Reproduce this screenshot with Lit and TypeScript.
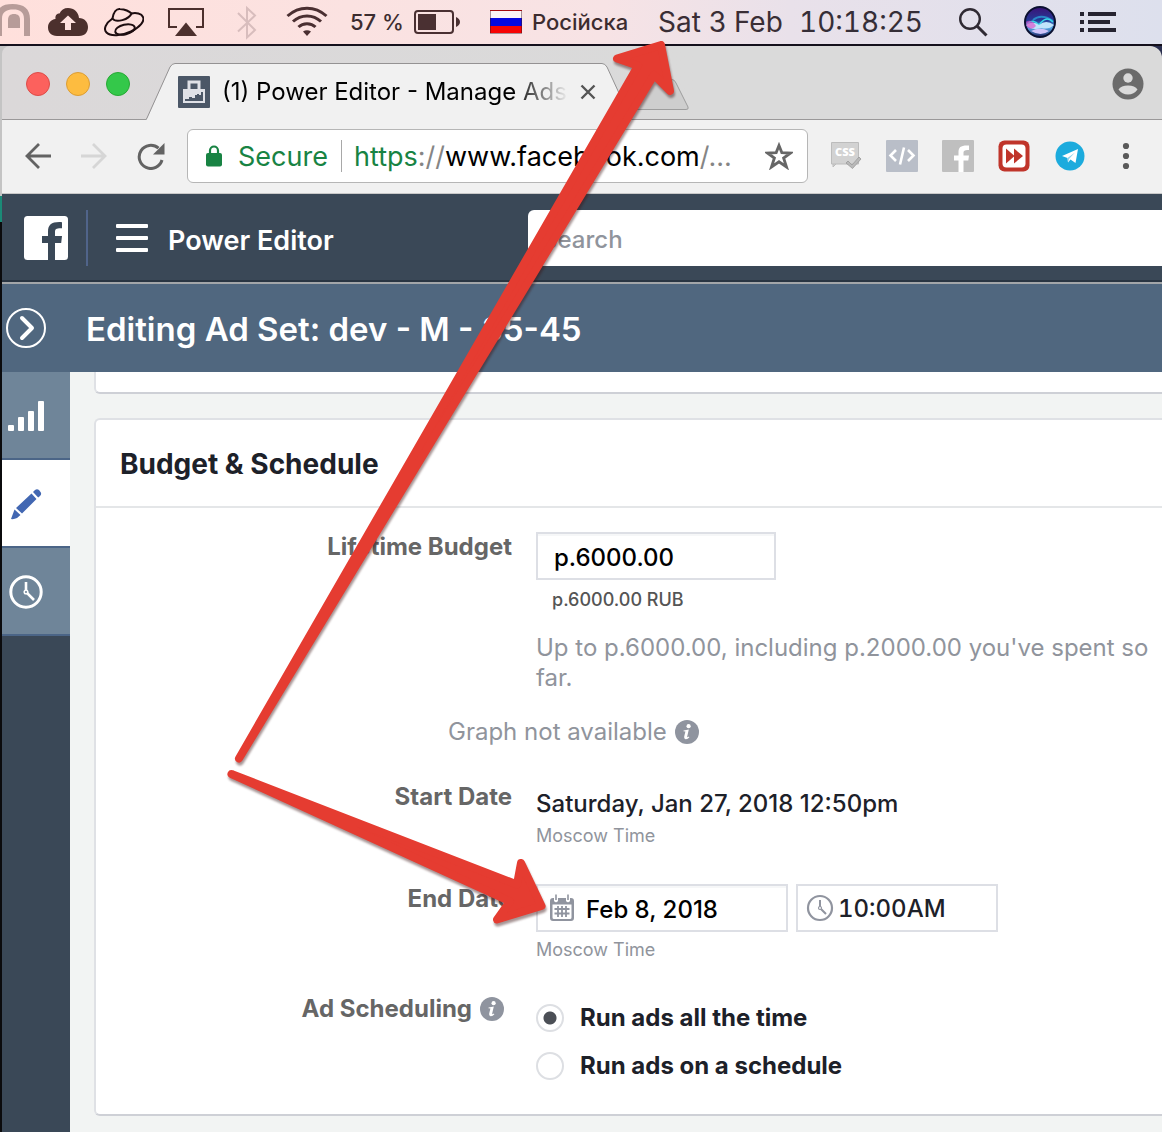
import { LitElement, html, css, svg } from "lit";
import { customElement, state } from "lit/decorators.js";

const info = html`<svg class="info" viewBox="0 0 24 24" width="24" height="24" aria-hidden="true">
  <circle cx="12" cy="12" r="12" fill="#8f949f"/>
  <circle cx="13.6" cy="6.2" r="2.1" fill="#fff"/>
  <path d="M8.6 10.4 L13.8 9.6 L12.2 16.4 Q12 17.8 13.8 16.6 L14.4 17.2 Q12.6 19.4 10.6 19.2 Q8.6 19 9.2 16.6 L10.4 11.6 L8.4 11.3 Z" fill="#fff"/>
</svg>`;

@customElement("mac-menubar")
class MacMenubar extends LitElement {
  static styles = css`
    :host { display: block; font-family: Inter, "Liberation Sans", sans-serif; }
    .bar { height: 44px; border-bottom: 2px solid #14101c; display: flex; align-items: center; color: #3c2c2f; font-weight: 450;
      background: linear-gradient(90deg, #ffe0dc 0%, #fbe2e1 30%, #f7e3e5 52%, #e9e1ea 68%, #dde0ed 100%); }
    svg { display: block; flex: none; }
    .cloud { margin-left: 18px; }
    .planet { margin-left: 16px; }
    .airplay { margin-left: 24px; }
    .bt { margin-left: 33px; }
    .wifi { margin-left: 29px; }
    .pct { margin-left: 22px; width: 64px; font-size: 22px; white-space: nowrap; }
    .flag { margin-left: 30px; width: 32px; height: 24px; box-sizing: border-box; border: 1px solid rgba(60,20,30,.45);
      background: linear-gradient(#fbf4f6 0 33%, #0608e0 33% 67%, #f70505 67%); }
    .lang { margin-left: 10px; width: 126px; font-size: 22px; }
    .date { width: 141px; font-size: 28px; color: #3a2e35; white-space: nowrap; font-weight: 400; }
    .time { width: 160px; font-size: 28px; color: #352e37; font-variant-numeric: tabular-nums; font-weight: 400; }
    .siri { margin-left: 36px; }
    .list { margin-left: 24px; }
  `;
  render() {
    return html`<div class="bar">
      <svg width="30" height="44" viewBox="0 0 30 44"><path d="M-4 36V19C-4 8 2 4 12.500 4C24 4 30 9 30 19V36H24V19C24 12 20 9.500 13.500 9.500C6 9.500 2 12 2 19V36Z" fill="#b79c99"/><path d="M8 28V20C8 16 10 14 14 14C18 14 20 16 20 20V28Z" fill="#b79c99"/></svg>
      <svg class="cloud" width="40" height="44" viewBox="0 0 40 44"><path d="M9 36C3 36 0 32 0 27.500C0 23 3 19.500 7.500 19C7 15 9 13.500 11.500 13.500C13 10 16 8 20 8C26 8 30.500 12 31 18C36.500 18 40 22 40 27C40 32 37 36 31 36Z" fill="#4c302d"/><path d="M20 15.500L28 23H23V30H17V23H12Z" fill="#ffe2df"/></svg>
      <svg class="planet" width="40" height="44" viewBox="0 0 40 44" fill="none" stroke="#1d0d10" stroke-width="2"><path d="M8.500 18.500C2 23 -1 29 2.500 32.500C6 36.500 18 36 27 31.500C36 27 41 21 39 17C37.500 13.500 32 12.500 27.500 13.500"/><path d="M8.500 18.500C9.500 12 12.500 8.500 16 9C21 9.500 25.500 11.500 27.500 13.500C25 19.500 12 23.500 8.500 18.500Z"/><ellipse cx="21" cy="29.500" rx="10" ry="4.800" transform="rotate(-13 21 29.500)"/></svg>
      <svg class="airplay" width="36" height="44" viewBox="0 0 36 44"><path d="M9 27H1V9H35V27H28" fill="none" stroke="#4c302d" stroke-width="2"/><path d="M18 22.500L29 36H7Z" fill="#4c302d"/></svg>
      <svg class="bt" width="20" height="44" viewBox="0 0 20 44"><path d="M1 13L18 30L10 37.500V8L18 15.500L1 31.500" fill="none" stroke="#d8bdbd" stroke-width="2"/></svg>
      <svg class="wifi" width="42" height="44" viewBox="0 0 42 44" fill="none" stroke="#4a2f31" stroke-width="3"><path d="M1.500 16C13 5.500 29 5.500 40.500 16M7 21.500C15 14 27 14 35 21.500M12.500 27C17 22.500 25 22.500 29.500 27"/><path d="M17 31.500Q21 29 25 31.500L21 36Z" fill="#4a2f31" stroke="none"/></svg>
      <span class="pct">57 %</span>
      <svg width="46" height="44" viewBox="0 0 46 44"><rect x="1" y="11" width="38" height="22" rx="3" fill="none" stroke="#4a3032" stroke-width="2"/><rect x="4" y="14" width="18" height="16" fill="#4a3032"/><path d="M42 17Q46 19 46 22Q46 25 42 27Z" fill="#4a3032"/></svg>
      <span class="flag"></span><span class="lang">Російска</span>
      <span class="date">Sat 3 Feb</span><time class="time">10:18:25</time>
      <svg width="29" height="44" viewBox="0 0 29 44" fill="none" stroke="#2f2a33" stroke-width="2.400"><circle cx="11" cy="19" r="9.800"/><path d="M18 26L27.500 35.500" stroke-width="3"/></svg>
      <svg class="siri" width="32" height="44" viewBox="0 0 32 44"><defs><linearGradient id="s" x1="0" y1="0" x2="0" y2="1"><stop offset="0" stop-color="#3b1277"/><stop offset=".45" stop-color="#243a96"/><stop offset=".7" stop-color="#5aa9e6"/><stop offset="1" stop-color="#1a1d5e"/></linearGradient></defs><circle cx="16" cy="22" r="15" fill="url(#s)" stroke="#0a1030" stroke-width="2"/><path d="M9 20Q17 13 29 21" fill="none" stroke="#2a86c8" stroke-width="2"/><path d="M3 24Q9 18 15 25Q22 15 29 22" fill="none" stroke="#35d7e8" stroke-width="1.500"/><path d="M2 25Q9 20 15 25Q22 19 30 25Q25 30 17 28Q8 31 2 25Z" fill="#bfe4fb"/><path d="M2 22Q7 18 12 26Q8 31 3 27Z" fill="#e23fc4" opacity=".6"/><path d="M7 31Q16 26 25 31Q17 37 7 31Z" fill="#cfc4fa"/></svg>
      <svg class="list" width="36" height="44" viewBox="0 0 36 44" fill="#262430"><path d="M0 12h4v4H0zM8 12h28v4H8zM0 20h4v4H0zM8 20h22v4H8zM0 28h4v4H0zM8 28h28v4H8z"/></svg>
    </div>`;
  }
}

@customElement("browser-chrome")
class BrowserChrome extends LitElement {
  static styles = css`
    :host { display: block; font-family: Inter, "Liberation Sans", sans-serif; }
    svg { display: block; flex: none; }
    button { border: 0; padding: 0; background: none; font: inherit; color: inherit; display: block; }
    .strip { height: 74px; box-sizing: border-box; border-bottom: 1px solid #9a9899; display: flex; align-items: flex-start;
      background: linear-gradient(90deg, #dbd8d9, #dadada 60%); border-radius: 8px 12px 0 0; }
    .lights { display: flex; gap: 16px; padding: 26px 0 0 24px; }
    .light { width: 24px; height: 24px; border-radius: 50%; box-sizing: border-box; border: 1px solid #dd4c48; background: #fc615d; }
    .light.y { border-color: #dc9d34; background: #fdbc40; }
    .light.g { border-color: #27a934; background: #34c84a; }
    .tab { position: relative; margin: 17px 0 0 16px; width: 485px; height: 57px; }
    .shape { position: absolute; left: 0; top: 0; }
    .inner { position: relative; display: flex; align-items: center; height: 57px; padding-left: 32px; }
    .title { margin-left: 12px; width: 350px; font-size: 24px; line-height: 30px; white-space: nowrap; overflow: hidden; color: #000;
      -webkit-mask-image: linear-gradient(90deg, #000 83%, transparent 99%); mask-image: linear-gradient(90deg, #000 83%, transparent 99%); }
    .close { margin-left: 8px; }
    .newtab { margin: 33px 0 0 4px; }
    .user { margin: 22px 18px 0 auto; }
    .tools { height: 74px; box-sizing: border-box; border-bottom: 1px solid #c9c9c9; background: #f1f1f1; display: flex; align-items: center; padding: 0 26px 2px 22px; }
    .nav { display: flex; gap: 28px; }
    .omni { flex: 1; margin: 0 22px; height: 54px; box-sizing: border-box; border: 1px solid #b6b6b6; border-radius: 6px; background: #fff;
      display: flex; align-items: center; padding: 0 14px 0 17px; font-size: 27px; min-width: 0; }
    .secure { color: #188343; margin-left: 15px; padding-top: 2px; width: 90px; text-align: left; white-space: nowrap; }
    .sep { width: 1px; height: 32px; background: #a8a8a8; margin: 0 12px 0 13px; }
    .url { flex: 1; min-width: 0; padding-top: 2px; white-space: nowrap; overflow: hidden; color: #000; outline: none; }
    .gr { color: #188343; }
    .lt { color: #858585; }
    .ext { display: flex; gap: 24px; align-items: center; }
    .dots { margin-left: 30px; }
  `;
  render() {
    return html`
      <div class="strip">
        <div class="lights"><button class="light" aria-label="Close"></button><button class="light y" aria-label="Minimize"></button><button class="light g" aria-label="Zoom"></button></div>
        <div class="tab">
          <svg class="shape" width="485" height="57" viewBox="0 0 485 57"><path d="M0 57L1 56L24 4Q26 .500 29 .500H456Q459 .500 461 4L484 56L485 57Z" fill="#f1f1f1"/><path d="M0 56.500L1 55L24 4Q26 .500 29 .500H456Q459 .500 461 4L485 56" fill="none" stroke="#949293"/></svg>
          <div class="inner">
            <svg width="32" height="32" viewBox="0 0 32 32"><rect width="32" height="32" rx="1" fill="#4b5767"/><path d="M11 13V6H21V13" fill="none" stroke="#dfe1e7" stroke-width="3"/><rect x="5" y="13" width="22" height="14" fill="#dfe1e7"/><path d="M7 25V23H11V21H14V22H17V19H19V18H21V19H23V16H25V25Z" fill="#4b5767"/></svg>
            <span class="title">(1) Power Editor - Manage Ads</span>
            <button class="close" aria-label="Close tab"><svg width="16" height="16" viewBox="0 0 16 16"><path d="M1.500 1.500L14.500 14.500M14.500 1.500L1.500 14.500" stroke="#555" stroke-width="2.400"/></svg></button>
          </div>
        </div>
        <button class="newtab" aria-label="New tab"><svg width="54" height="31" viewBox="0 0 54 31"><path d="M2 5Q0 .500 4 .500H37Q39.500 .500 41 4L53 28Q54 30.500 51 30.500H-10L2 5Z" fill="#cecece" stroke="#9d9d9d"/></svg></button>
        <button class="user" aria-label="Profile"><svg width="32" height="32" viewBox="0 0 32 32"><circle cx="16" cy="16" r="15.500" fill="#6b6b6b"/><circle cx="16" cy="10" r="4.700" fill="#dadada"/><path d="M6.500 21.500Q9 17.500 16 17.500Q23 17.500 25.500 21.500Q22 26.500 16 26.500Q10 26.500 6.500 21.500Z" fill="#dadada"/></svg></button>
      </div>
      <div class="tools">
        <div class="nav">
          <button aria-label="Back"><svg width="28" height="28" viewBox="0 0 28 28" fill="none" stroke="#636363" stroke-width="2.800"><path d="M27 14H4M15 2L3 14L15 26"/></svg></button>
          <button aria-label="Forward"><svg width="28" height="28" viewBox="0 0 28 28" fill="none" stroke="#d6d6d6" stroke-width="2.800"><path d="M1 14H24M13 2L25 14L13 26"/></svg></button>
          <button aria-label="Reload"><svg width="29" height="28" viewBox="0 0 29 28"><path d="M22.500 6.200A11.600 11.600 0 1 0 26 18" fill="none" stroke="#636363" stroke-width="3"/><path d="M28.500 1V12.500H17Z" fill="#636363"/></svg></button>
        </div>
        <div class="omni">
          <svg width="18" height="22" viewBox="0 0 18 22"><rect x="1" y="8" width="16" height="13.500" rx="2" fill="#188343"/><path d="M5 9V5.500A4 4 0 0 1 13 5.500V9" fill="none" stroke="#188343" stroke-width="2.200"/></svg>
          <button class="secure">Secure</button><span class="sep"></span>
          <div class="url" role="textbox" aria-label="Address" contenteditable="true"><span class="gr">https</span><span class="lt">://</span>www.facebook.com<span class="lt">/...</span></div>
          <button aria-label="Bookmark"><svg width="28" height="28" viewBox="0 0 28 28"><path d="M14 3.500L16.800 10.600L25.500 11L18.600 16L21.500 25L14 19.800L6.500 25L9.400 16L2.500 11L11.200 10.600Z" fill="none" stroke="#666" stroke-width="2.800"/></svg></button>
        </div>
        <div class="ext">
          <button aria-label="CSS"><svg width="32" height="32" viewBox="0 0 32 32"><path d="M3 24V27L6 24M1.500 2.500H28.500V24H1.500Z" fill="#d2d2d2" stroke="#bcbcbc"/><text x="15" y="16" text-anchor="middle" font-family="Open Sans, sans-serif" font-size="11" font-weight="800" fill="#fff">CSS</text><path d="M18 21L22 25L29 17L31 19L22.500 28.500L16 23Z" fill="#b9b9b9" stroke="#999" stroke-width=".8"/></svg></button>
          <button aria-label="Code"><svg width="32" height="32" viewBox="0 0 32 32"><rect width="32" height="32" rx="1" fill="#b9bec8"/><path d="M10 10L4.500 15.500L10 21M22 10L27.500 15.500L22 21M18 7.500L14 24.500" fill="none" stroke="#fff" stroke-width="2.600"/></svg></button>
          <button aria-label="Facebook"><svg width="32" height="32" viewBox="0 0 32 32"><rect width="32" height="32" rx="1" fill="#bfbfbf"/><path d="M16.500 32V20.500H12V15.500H16.500V12C16.500 7 19 5 27 5.500V10C23 9.700 21.500 10.500 21.500 12.500V15.500H27L26.300 20.500H21.500V32Z" fill="#fff"/></svg></button>
          <button aria-label="Video speed"><svg width="32" height="32" viewBox="0 0 32 32"><rect x=".5" y=".5" width="31" height="31" rx="6" fill="#c0352b"/><rect x="4.500" y="4.500" width="23" height="23" rx="4" fill="#fff"/><path d="M8 8.500L16 15.500V8.500L25 16L16 23.500V16.500L8 23.500Z" fill="#c0352b"/></svg></button>
          <button aria-label="Telegram"><svg width="32" height="32" viewBox="0 0 32 32"><circle cx="16" cy="16" r="14.500" fill="#1cabdd"/><path d="M8 16L24 9L21.500 23L16.500 19.500L14 22.500L13.500 18Z" fill="#fff"/><path d="M13.500 18L21 12.500L15 19L14 22.500Z" fill="#8fd4ee"/></svg></button>
        </div>
        <button class="dots" aria-label="Menu"><svg width="20" height="28" viewBox="0 0 20 28" fill="#5a5a5a"><circle cx="10" cy="4" r="3.100"/><circle cx="10" cy="14" r="3.100"/><circle cx="10" cy="24" r="3.100"/></svg></button>
      </div>`;
  }
}

@customElement("budget-form")
class BudgetForm extends LitElement {
  @state() mode = "all";
  static styles = css`
    :host { display: block; font-family: Inter, "Liberation Sans", sans-serif; font-size: 24px; line-height: 30px; font-weight: 450; color: #1d2129; }
    svg { display: block; flex: none; }
    .card { background: #fff; border: 2px solid #dfe1e5; border-right: 0; border-bottom-color: #ced0d6; border-radius: 6px 0 0 6px; }
    .head { margin: 0; height: 88px; box-sizing: border-box; border-bottom: 2px solid #e4e6e8; padding: 2px 0 0 24px; display: flex; align-items: center; font-size: 28px; font-weight: 650; }
    .body { padding: 24px 0 34px 0; }
    .row { display: grid; grid-template-columns: 416px minmax(0, 1fr); column-gap: 24px; }
    .graph { margin-top: 24px; }
    .start { margin-top: 35px; }
    .end { margin-top: 36px; }
    .sched { margin-top: 32px; }
    .label { justify-self: end; font-weight: 650; color: #666; white-space: nowrap; }
    .lab { display: flex; align-items: center; gap: 8px; height: 30px; padding-right: 8px; }
    .box { display: flex; align-items: center; height: 48px; box-sizing: border-box; border: 2px solid #dddfe5; background: #fff; box-shadow: inset 0 2px 0 #f6f7f8; }
    .box input { flex: 1; min-width: 0; width: 0; border: 0; outline: 0; padding: 2px 0 0; box-sizing: border-box; background: none; font: inherit; color: #000; height: 40px; }
    .money { width: 240px; padding-left: 16px; }
    .date { width: 252px; padding-left: 12px; gap: 12px; }
    .time { width: 202px; padding-left: 8px; gap: 4px; box-shadow: none; }
    .box.time input { font-variant-numeric: tabular-nums; color: #1d2129; padding: 0; }
    .pair { display: flex; gap: 8px; }
    .sub { margin-top: 8px; padding-left: 16px; font-size: 18px; line-height: 24px; color: #555; }
    .help { margin: 21px 0 0; color: #90949c; font-weight: 400; }
    .graph { display: flex; align-items: center; gap: 8px; padding-left: 352px; color: #90949c; font-weight: 400; }
    .value { padding-top: 8px; line-height: 28px; }
    .zone { margin-top: 6px; font-size: 18px; line-height: 24px; color: #90949c; font-weight: 400; }
    .opts { display: flex; flex-direction: column; gap: 20px; padding-top: 10px; }
    .opt { display: flex; align-items: center; gap: 16px; height: 28px; font-weight: 650; }
    .opt input { appearance: none; margin: 0; width: 28px; height: 28px; box-sizing: border-box; border: 2px solid #dddfe3; border-radius: 50%; background: #fff; }
    .opt input:checked { background: radial-gradient(circle, #4b4f56 0 6px, #fff 7px); }
  `;
  render() {
    return html`<section class="card">
      <h2 class="head">Budget &amp; Schedule</h2>
      <div class="body">
        <div class="row">
          <label class="label" for="budget">Lifetime Budget</label>
          <div>
            <div class="box money"><input id="budget" type="text" value="p.6000.00"></div>
            <div class="sub">p.6000.00 RUB</div>
            <p class="help">Up to p.6000.00, including p.2000.00 you've spent so far.</p>
          </div>
        </div>
        <div class="graph">Graph not available ${info}</div>
        <div class="row start">
          <span class="label">Start Date</span>
          <div><div class="value">Saturday, Jan 27, 2018 12:50pm</div><div class="zone">Moscow Time</div></div>
        </div>
        <div class="row end">
          <label class="label" for="end">End Date</label>
          <div>
            <div class="pair">
              <div class="box date">
                <svg width="24" height="28" viewBox="0 0 24 28"><path d="M3 4H4V7Q6 9.500 8 7V4H16V7Q18 9.500 20 7V4H21Q24 4 24 7V24Q24 27 21 27H3Q0 27 0 24V7Q0 4 3 4ZM2.500 10.500V23.500Q2.500 25 4 25H20Q21.500 25 21.500 23.500V10.500Z" fill="#90949f" fill-rule="evenodd"/><path d="M6 .500V6M18 .500V6" stroke="#90949f" stroke-width="1.600"/><path d="M4.500 15H19.500M4.500 19.500H19.500M8 12V23M12 12V23M16 12V23" stroke="#90949f" stroke-width="1.800"/></svg>
                <input id="end" type="text" value="Feb 8, 2018">
              </div>
              <div class="box time">
                <svg width="28" height="28" viewBox="0 0 28 28" fill="none" stroke="#90949f"><circle cx="14" cy="14" r="12" stroke-width="2.200"/><path d="M14 6V14L20 20" stroke-width="2"/><circle cx="14" cy="14" r="1.500" fill="#fff" stroke-width="1.200"/></svg>
                <input type="text" aria-label="End time" value="10:00AM">
              </div>
            </div>
            <div class="zone">Moscow Time</div>
          </div>
        </div>
        <div class="row sched">
          <span class="label lab">Ad Scheduling ${info}</span>
          <div class="opts" role="radiogroup" aria-label="Ad Scheduling">
            <label class="opt"><input type="radio" name="s" .checked=${this.mode === "all"} @change=${() => (this.mode = "all")}>Run ads all the time</label>
            <label class="opt"><input type="radio" name="s" .checked=${this.mode === "some"} @change=${() => (this.mode = "some")}>Run ads on a schedule</label>
          </div>
        </div>
      </div>
    </section>`;
  }
}

@customElement("app-root")
class AppRoot extends LitElement {
  static styles = css`
    :host { display: block; position: relative; overflow: hidden; font-family: Inter, "Liberation Sans", sans-serif; }
    svg { display: block; flex: none; }
    button { border: 0; padding: 0; background: none; font: inherit; color: inherit; }
    .screen { min-height: 100vh; display: flex; flex-direction: column; }
    .desk { flex: 1; display: flex; flex-direction: column; padding-left: 2px;
      background: linear-gradient(90deg, transparent 50%, #2b3050 50%) 0 0 / 100% 60px no-repeat, linear-gradient(#c4c4c4 0 150px, #1b8a77 150px 176px, #0b0b0d 176px); }
    .app { flex: 1; display: flex; flex-direction: column; }
    .top { height: 88px; box-sizing: border-box; background: #3a4857; border-bottom: 2px solid #293542; display: flex; align-items: center; padding: 2px 0 0 22px; color: #fff; }
    .rule { width: 2px; height: 56px; background: #50648a; margin-left: 18px; }
    .burger { margin-left: 27px; }
    .brand { margin: 0; padding: 4px 0 0 19px; width: 360px; box-sizing: border-box; font-size: 27px; font-weight: 600; }
    .search { flex: 1; min-width: 0; height: 56px; box-sizing: border-box; border: 0; outline: 0; border-radius: 6px 0 0 6px; background: #fff; padding: 2px 14px 0; font: inherit; font-size: 24px; font-weight: 450; color: #1d2129; margin-left: 19px; }
    .search::placeholder { color: #90949c; opacity: 1; }
    .edit { height: 88px; border-top: 2px solid #a3a6a9; background: #50677f; display: flex; align-items: center; padding-left: 4px; color: #fff; }
    .edit h1 { margin: 0 0 0 40px; padding-top: 2px; font-size: 33px; font-weight: 600; white-space: nowrap; }
    .cols { flex: 1; display: flex; background: #f2f4f3; }
    .rail { width: 68px; flex: none; background: #3a4857; display: flex; flex-direction: column; }
    .rail button { height: 88px; box-sizing: border-box; border-bottom: 2px solid #4b6587; background: #6f8599; display: flex; align-items: center; padding: 2px 0 0 4px; }
    .rail .on { background: #fff; }
    .main { flex: 1; min-width: 0; padding: 0 0 16px 24px; }
    .prev { height: 20px; background: #fff; border-left: 2px solid #dfe1e5; border-bottom: 2px solid #ced0d6; border-radius: 0 0 0 6px; margin-bottom: 24px; }
    .arrows { position: absolute; left: 0; top: 0; pointer-events: none; filter: drop-shadow(1px 3px 1px rgba(60,20,20,.45)); }
  `;
  render() {
    return html`
      <div class="screen">
        <mac-menubar></mac-menubar>
        <div class="desk">
          <browser-chrome></browser-chrome>
          <div class="app">
            <header class="top">
              <svg width="44" height="44" viewBox="0 0 44 44"><rect width="44" height="44" rx="3.500" fill="#fff"/><path d="M24 44V27H18V20H24V15.500C24 8.500 28 5.500 38 6.200V12.200C32.500 12 31 12.800 31 16V20H38L37.200 27H31V44Z" fill="#3a4857"/></svg>
              <span class="rule"></span>
              <button class="burger" aria-label="Menu"><svg width="34" height="32" viewBox="0 0 34 32" fill="#fff"><rect x="1" y="2" width="32" height="4" rx="1"/><rect x="1" y="14" width="32" height="4" rx="1"/><rect x="1" y="26" width="32" height="4" rx="1"/></svg></button>
              <p class="brand">Power Editor</p>
              <input class="search" type="search" placeholder="Search" aria-label="Search">
            </header>
            <div class="edit">
              <button aria-label="Collapse"><svg width="40" height="40" viewBox="0 0 40 40" fill="none" stroke="#fff"><circle cx="20" cy="20" r="19" stroke-width="2"/><path d="M16 10L26 20L16 30" stroke-width="4" stroke-linecap="round" stroke-linejoin="round"/></svg></button>
              <h1>Editing Ad Set: dev - M - 35-45</h1>
            </div>
            <div class="cols">
              <nav class="rail">
                <button aria-label="Charts"><svg width="40" height="32" viewBox="0 0 40 32" fill="#fff"><rect x="2" y="25" width="6" height="6" rx="1"/><rect x="12" y="17" width="6" height="14" rx="1"/><rect x="22" y="11" width="6" height="20" rx="1"/><rect x="32" y="1" width="6" height="30" rx="1"/></svg></button>
                <button class="on" aria-label="Edit"><svg width="40" height="32" viewBox="0 0 40 32" fill="#4267b2"><path d="M25.500 5.500L30.500 11L16 25.500L10 20ZM27 4L29 2Q31 .500 33 2L34.500 4Q36 6 34 8L32.200 9.500ZM8.500 21.500L14.500 27L11 30Q8 31.500 5 31Z"/></svg></button>
                <button aria-label="History"><svg width="40" height="40" viewBox="0 0 40 40" fill="none" stroke="#fff"><circle cx="20" cy="20" r="15.200" stroke-width="3"/><path d="M20 10V20L28 28" stroke-width="2.600"/><circle cx="20" cy="20" r="1.800" fill="#6f8599" stroke-width="1.500"/></svg></button>
              </nav>
              <main class="main"><div class="prev"></div><budget-form></budget-form></main>
            </div>
          </div>
        </div>
      </div>
      <svg class="arrows" width="700" height="940" viewBox="0 0 700 940" aria-hidden="true">
        ${svg`<g fill="#e53c31" stroke="#e53c31" stroke-width="8" stroke-linejoin="round">
          <path d="M239 758.500L638 65.700L617 58.500L661 45L670 91L654 75Z"/>
          <path d="M231.500 774L517 884.500L521 863L541.500 906L497 919.500L510 901.400Z"/>
        </g>`}
      </svg>`;
  }
}
